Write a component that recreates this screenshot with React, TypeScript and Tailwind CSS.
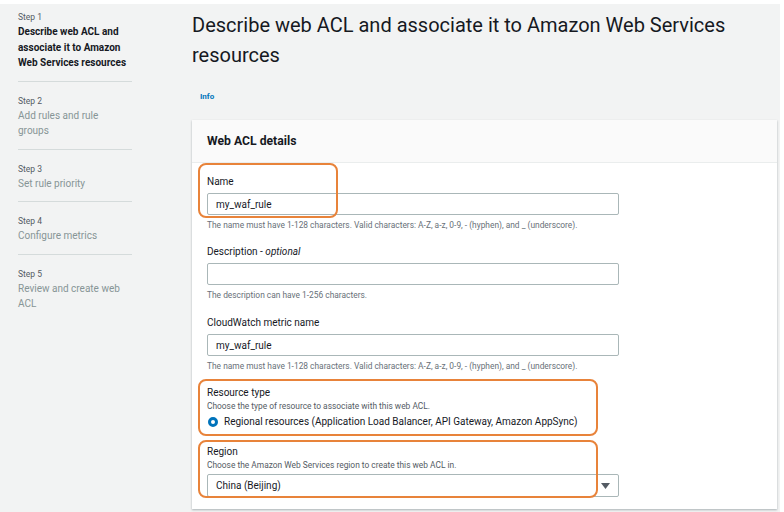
import React from "react";

const font = { fontFamily: "Roboto, 'Liberation Sans', Arial, sans-serif" };

const steps = [
  { step: "Step 1", lines: ["Describe web ACL and", "associate it to Amazon", "Web Services resources"], active: true },
  { step: "Step 2", lines: ["Add rules and rule", "groups"] },
  { step: "Step 3", lines: ["Set rule priority"] },
  { step: "Step 4", lines: ["Configure metrics"] },
  { step: "Step 5", lines: ["Review and create web", "ACL"] },
];

const nameHint =
  "The name must have 1-128 characters. Valid characters: A-Z, a-z, 0-9, - (hyphen), and _ (underscore).";

function Sidebar() {
  return (
    <aside className="w-[192px] shrink-0 pl-[18px] pt-[8px]">
      {steps.map((s, i) => (
        <div key={s.step} className="w-[114px]">
          {i > 0 && <div className="h-px bg-[#d5dbdb] mt-[10px] mb-[14px]" />}
          <div className="text-[8.5px] leading-[10px] text-[#545b64]">{s.step}</div>
          <div
            className={`mt-[2px] text-[10px] leading-[15.5px] whitespace-nowrap ${
              s.active ? "font-bold text-[#16191f]" : "text-[#879596]"
            }`}
          >
            {s.lines.map((l) => (
              <div key={l}>{l}</div>
            ))}
          </div>
        </div>
      ))}
    </aside>
  );
}

function TextInput({ value }: { value?: string }) {
  return (
    <div className="mt-[4px] w-[412px] h-[22px] border border-[#aab7b8] rounded-[2px] bg-white flex items-center px-[8px] text-[10px] text-[#16191f]">
      {value}
    </div>
  );
}

function Hint({ children }: { children: React.ReactNode }) {
  return <div className="mt-[5px] text-[8.4px] leading-[10px] text-[#687078] whitespace-nowrap">{children}</div>;
}

function Label({ children }: { children: React.ReactNode }) {
  return <div className="text-[10px] leading-[14px] text-[#16191f]">{children}</div>;
}

export default function App() {
  return (
    <div className="w-[784px] h-[512px] bg-white pt-[4px] pr-[4px] overflow-hidden" style={font}>
      <div className="h-full bg-[#f2f3f3] flex">
        <Sidebar />
        <main className="flex-1 pt-[6px]">
          <h1 className="text-[20px] leading-[30px] text-[#16191f] whitespace-nowrap">
            <div>Describe web ACL and associate it to Amazon Web Services</div>
            <div>resources</div>
          </h1>
          <div className="mt-[21px] ml-[8px] text-[8px] leading-[12px] font-bold text-[#0073bb]">Info</div>
          <section className="relative mt-[17px] w-[585px] bg-white shadow-[0_1px_2px_rgba(0,28,36,0.3)]">
            <div className="h-[43px] bg-[#fafafa] border-b border-[#eaeded] flex items-center px-[15px] text-[12.2px] font-bold text-[#16191f]">
              Web ACL details
            </div>
            <div className="px-[15px] pt-[12px] pb-[12px]">
              <Label>Name</Label>
              <TextInput value="my_waf_rule" />
              <Hint>{nameHint}</Hint>

              <div className="mt-[15px]">
                <Label>
                  Description - <i>optional</i>
                </Label>
              </div>
              <TextInput />
              <Hint>The description can have 1-256 characters.</Hint>

              <div className="mt-[16px]">
                <Label>CloudWatch metric name</Label>
              </div>
              <TextInput value="my_waf_rule" />
              <Hint>{nameHint}</Hint>

              <div className="mt-[15px]">
                <Label>Resource type</Label>
              </div>
              <div className="mt-[1px] text-[8.4px] leading-[10px] text-[#545b64]">
                Choose the type of resource to associate with this web ACL.
              </div>
              <div className="mt-[4px] flex items-center gap-[6px] pl-[1px] text-[10px] leading-[14px] text-[#16191f]">
                <span className="w-[10px] h-[10px] rounded-full border-[3px] border-[#0073bb] bg-white" />
                Regional resources (Application Load Balancer, API Gateway, Amazon AppSync)
              </div>

              <div className="mt-[16px]">
                <Label>Region</Label>
              </div>
              <div className="mt-[1px] text-[8.4px] leading-[10px] text-[#545b64]">
                Choose the Amazon Web Services region to create this web ACL in.
              </div>
              <div className="mt-[4px] w-[412px] h-[23px] border border-[#aab7b8] rounded-[2px] bg-white flex items-center justify-between px-[8px] text-[10px] text-[#16191f]">
                <span>China (Beijing)</span>
                <svg width="9" height="6" viewBox="0 0 9 6">
                  <path d="M0 0 L9 0 L4.5 6 Z" fill="#545b64" />
                </svg>
              </div>
            </div>

            {/* annotation outlines */}
            <div className="absolute left-[6px] top-[43px] w-[140px] h-[55px] border-2 border-[#e8833a] rounded-[8px]" />
            <div className="absolute left-[6px] top-[259px] w-[400px] h-[57px] border-2 border-[#e8833a] rounded-[8px]" />
            <div className="absolute left-[6px] top-[320px] w-[400px] h-[58px] border-2 border-[#e8833a] rounded-[8px]" />
          </section>
        </main>
      </div>
    </div>
  );
}
